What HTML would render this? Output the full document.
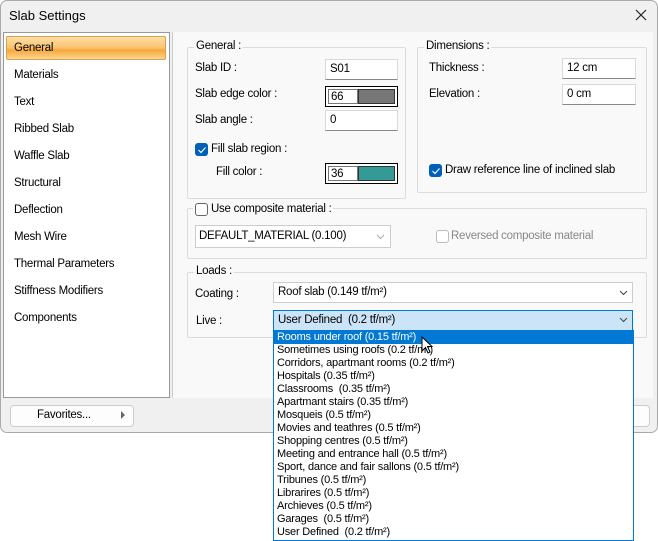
<!DOCTYPE html><html><head><style>
*{box-sizing:border-box;margin:0;padding:0}
body{width:658px;height:541px;background:#fff;font-family:"Liberation Sans",sans-serif;font-size:11.5px;letter-spacing:-0.25px;color:#000;position:relative;overflow:hidden}
.a{position:absolute}
.dlg{left:0;top:0;width:658px;height:433px;background:#f0f0f0;border:1px solid #aaa;border-radius:7px}
.inp{position:absolute;background:#fff;border:1px solid #d9d9d9;border-bottom:1px solid #888;height:21px;padding:3px 4px}
.grp{position:absolute;border:1px solid #dcdcdc;border-radius:2px}
.lg{position:absolute;background:#f9f9f9;padding:0 2px;top:-8px;left:6px}
.cb{position:absolute;width:13px;height:13px;border-radius:3px}
.cb.on{background:#005fb8}
.cb.off{border:1px solid #666;background:#fff}
.li{position:absolute;left:14px}
.dd{position:absolute;font-size:11px;left:3px;letter-spacing:-0.2px}
</style></head><body>
<div class="a dlg"></div>
<div class="a" style="left:9px;top:8px;font-size:13px;letter-spacing:0">Slab Settings</div>
<svg class="a" style="left:635px;top:9px" width="12" height="12"><path d="M1 1L11 11M11 1L1 11" stroke="#222" stroke-width="1.2"/></svg>
<div class="a" style="left:3px;top:32px;width:167px;height:366px;background:#fff;border:1px solid #999"></div>
<div class="a" style="left:6px;top:36px;width:160px;height:24px;border:1px solid #d9a050;border-radius:2px;background:linear-gradient(#fde0a8,#fbc26c 50%,#f8a83a 60%,#fcd592)"></div>
<div class="li" style="top:42px">General</div>
<div class="li" style="top:69px">Materials</div>
<div class="li" style="top:96px">Text</div>
<div class="li" style="top:123px">Ribbed Slab</div>
<div class="li" style="top:150px">Waffle Slab</div>
<div class="li" style="top:177px">Structural</div>
<div class="li" style="top:204px">Deflection</div>
<div class="li" style="top:231px">Mesh Wire</div>
<div class="li" style="top:258px">Thermal Parameters</div>
<div class="li" style="top:285px">Stiffness Modifiers</div>
<div class="li" style="top:312px">Components</div>
<div class="a" style="left:172px;top:32px;width:481px;height:366px;background:#f9f9f9;border-left:1px solid #ccc"></div>
<div class="grp" style="left:187px;top:47px;width:219px;height:152px"><span class="lg">General :</span></div>
<div class="a" style="left:195px;top:62px">Slab ID :</div>
<div class="inp" style="left:325px;top:59px;width:73px">S01</div>
<div class="a" style="left:195px;top:88px">Slab edge color :</div>
<div class="a" style="left:325px;top:86px;width:73px;height:21px;border:1px solid #000;background:#fff"><div class="a" style="left:2px;top:2px;width:30px;height:15px;border:1px solid #777;padding:1px 2px">66</div><div class="a" style="left:32px;top:2px;width:37px;height:15px;background:#777;border:1px solid #333"></div></div>
<div class="a" style="left:195px;top:114px">Slab angle :</div>
<div class="inp" style="left:325px;top:110px;width:73px">0</div>
<div class="cb on" style="left:195px;top:143px"></div><svg class="a" style="left:197px;top:145px" width="10" height="10"><path d="M1.5 5L4 7.5L8.5 2.5" stroke="#fff" fill="none" stroke-width="1.2"/></svg>
<div class="a" style="left:211px;top:143px">Fill slab region :</div>
<div class="a" style="left:216px;top:166px">Fill color :</div>
<div class="a" style="left:325px;top:163px;width:73px;height:21px;border:1px solid #000;background:#fff"><div class="a" style="left:2px;top:2px;width:30px;height:15px;border:1px solid #777;padding:1px 2px">36</div><div class="a" style="left:32px;top:2px;width:37px;height:15px;background:#339a95;border:1px solid #333"></div></div>
<div class="grp" style="left:417px;top:47px;width:230px;height:146px"><span class="lg">Dimensions :</span></div>
<div class="a" style="left:429px;top:62px">Thickness :</div>
<div class="inp" style="left:562px;top:58px;width:74px">12 cm</div>
<div class="a" style="left:429px;top:88px">Elevation :</div>
<div class="inp" style="left:562px;top:84px;width:74px">0 cm</div>
<div class="cb on" style="left:429px;top:164px"></div><svg class="a" style="left:431px;top:166px" width="10" height="10"><path d="M1.5 5L4 7.5L8.5 2.5" stroke="#fff" fill="none" stroke-width="1.2"/></svg>
<div class="a" style="left:445px;top:164px">Draw reference line of inclined slab</div>
<div class="grp" style="left:187px;top:208px;width:460px;height:51px"></div>
<div class="a" style="left:193px;top:202px;width:140px;height:14px;background:#f9f9f9"></div>
<div class="cb off" style="left:195px;top:203px"></div>
<div class="a" style="left:211px;top:203px">Use composite material :</div>
<div class="a" style="left:195px;top:225px;width:196px;height:23px;background:#fff;border:1px solid #ccc;padding:4px 3px">DEFAULT_MATERIAL (0.100)</div>
<svg class="a" style="left:376px;top:234px" width="9" height="6"><path d="M1 1L4.5 4.5L8 1" stroke="#aaa" fill="none"/></svg>
<div class="cb off" style="left:436px;top:230px;border-color:#bbb"></div>
<div class="a" style="left:451px;top:230px;color:#888">Reversed composite material</div>
<div class="grp" style="left:187px;top:272px;width:460px;height:66px"><span class="lg">Loads :</span></div>
<div class="a" style="left:195px;top:288px">Coating :</div>
<div class="a" style="left:273px;top:282px;width:360px;height:21px;background:#fff;border:1px solid #ccc;padding:3px 4px">Roof slab (0.149 tf/m²)</div>
<svg class="a" style="left:619px;top:290px" width="9" height="6"><path d="M1 1L4.5 4.5L8 1" stroke="#444" fill="none"/></svg>
<div class="a" style="left:196px;top:315px">Live :</div>
<div class="a" style="left:273px;top:310px;width:360px;height:21px;background:#cce4f7;border:1px solid #0078d4;padding:3px 4px">User Defined&nbsp; (0.2 tf/m²)</div>
<svg class="a" style="left:619px;top:317px" width="9" height="6"><path d="M1 1L4.5 4.5L8 1" stroke="#444" fill="none"/></svg>
<div class="a" style="left:10px;top:405px;width:124px;height:22px;background:#fdfdfd;border:1px solid #ccc;border-radius:4px"></div>
<div class="a" style="left:37px;top:409px">Favorites...</div>
<svg class="a" style="left:121px;top:411px" width="5" height="8"><path d="M0 0L4 4L0 8Z" fill="#666"/></svg>
<div class="a" style="left:600px;top:405px;width:50px;height:22px;background:#fdfdfd;border:1px solid #ccc;border-radius:4px"></div>
<div class="a" style="left:273px;top:330px;width:361px;height:211px;background:#fff;border:1px solid #0078d4">
<div class="a" style="left:0;top:0;width:359px;height:13px;background:#0078d4"></div>
<div class="dd" style="top:0;color:#fff">Rooms under roof (0.15 tf/m²)</div>
<div class="dd" style="top:13px">Sometimes using roofs (0.2 tf/m²)</div>
<div class="dd" style="top:26px">Corridors, apartmant rooms (0.2 tf/m²)</div>
<div class="dd" style="top:39px">Hospitals (0.35 tf/m²)</div>
<div class="dd" style="top:52px">Classrooms&nbsp; (0.35 tf/m²)</div>
<div class="dd" style="top:65px">Apartmant stairs (0.35 tf/m²)</div>
<div class="dd" style="top:78px">Mosqueis (0.5 tf/m²)</div>
<div class="dd" style="top:91px">Movies and teathres (0.5 tf/m²)</div>
<div class="dd" style="top:104px">Shopping centres (0.5 tf/m²)</div>
<div class="dd" style="top:117px">Meeting and entrance hall (0.5 tf/m²)</div>
<div class="dd" style="top:130px">Sport, dance and fair sallons (0.5 tf/m²)</div>
<div class="dd" style="top:143px">Tribunes (0.5 tf/m²)</div>
<div class="dd" style="top:156px">Librarires (0.5 tf/m²)</div>
<div class="dd" style="top:169px">Archieves (0.5 tf/m²)</div>
<div class="dd" style="top:182px">Garages&nbsp; (0.5 tf/m²)</div>
<div class="dd" style="top:195px">User Defined&nbsp; (0.2 tf/m²)</div>
</div>
<svg class="a" style="left:421px;top:336px" width="14" height="20"><path d="M1 1L1 15L4.5 11.5L7 17L9 16L6.5 10.5L11 10.5Z" fill="#fff" stroke="#000"/></svg>
</body></html>
